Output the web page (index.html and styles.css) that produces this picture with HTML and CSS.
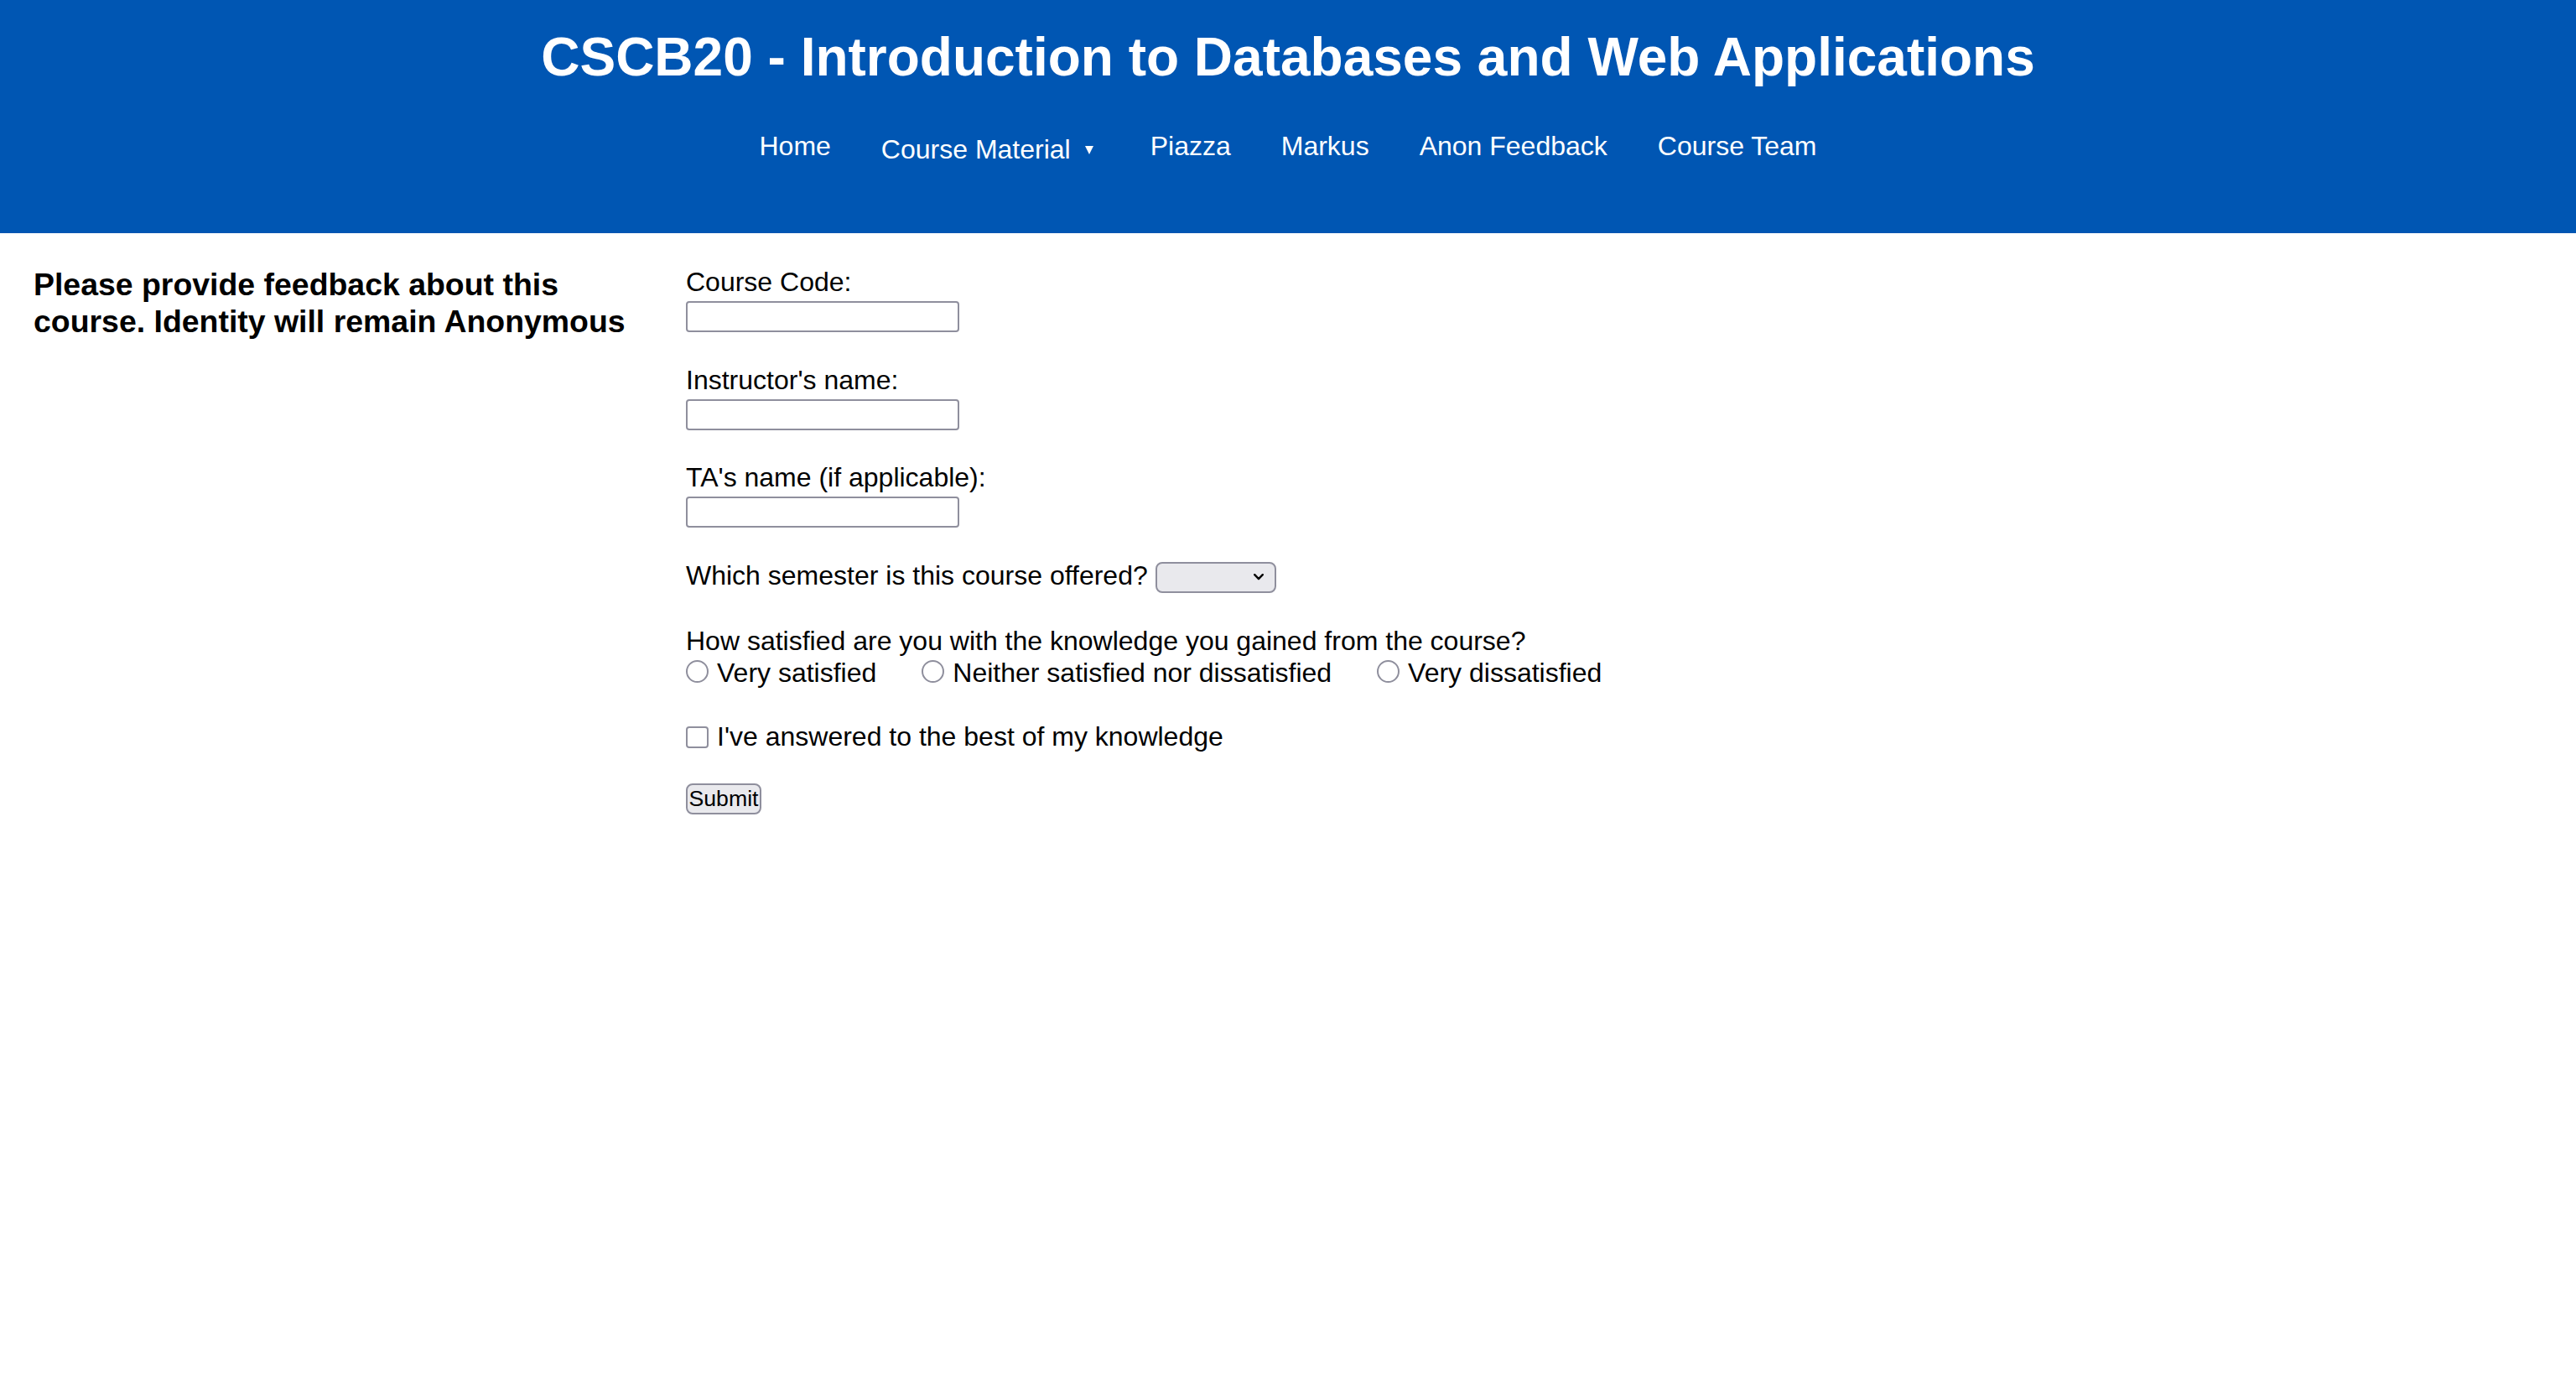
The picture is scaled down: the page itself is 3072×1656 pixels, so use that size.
FILE: index.html
```html
<!DOCTYPE html>
<html lang="en">
<head>
<meta charset="utf-8">
<title>CSCB20 - Anon Feedback</title>
<link rel="stylesheet" href="styles.css">
</head>
<body>
<header class="site-header">
  <h1 class="site-title">CSCB20 - Introduction to Databases and Web Applications</h1>
  <nav class="site-nav">
    <a class="nav-link" href="#">Home</a>
    <div class="nav-dropdown">
      <span class="nav-link">Course Material</span>
      <span class="caret"></span>
    </div>
    <a class="nav-link" href="#">Piazza</a>
    <a class="nav-link" href="#">Markus</a>
    <a class="nav-link" href="#">Anon Feedback</a>
    <a class="nav-link" href="#">Course Team</a>
  </nav>
</header>
<main class="page">
  <aside class="intro">
    <h3 class="intro-title">Please provide feedback about this course. Identity will remain Anonymous</h3>
  </aside>
  <form class="feedback" action="#">
    <div class="field">
      <label class="field-label" for="code">Course Code:</label>
      <input class="text-input" id="code" type="text">
    </div>
    <div class="field">
      <label class="field-label" for="instructor">Instructor's name:</label>
      <input class="text-input" id="instructor" type="text">
    </div>
    <div class="field">
      <label class="field-label" for="ta">TA's name (if applicable):</label>
      <input class="text-input" id="ta" type="text">
    </div>
    <div class="field inline-field">
      <label class="inline-label" for="semester">Which semester is this course offered?</label>
      <span class="select-wrap">
        <select class="select" id="semester"><option></option></select>
        <svg class="chevron" width="12" height="8" viewBox="0 0 12 8"><path d="M1.2 1.2 L6 6.2 L10.8 1.2" fill="none" stroke="#000" stroke-width="2.4" stroke-linecap="round" stroke-linejoin="round"/></svg>
      </span>
    </div>
    <div class="field satisfaction">
      <p class="question">How satisfied are you with the knowledge you gained from the course?</p>
      <div class="options">
        <label class="option"><input class="radio" type="radio" name="sat">Very satisfied</label>
        <label class="option"><input class="radio" type="radio" name="sat">Neither satisfied nor dissatisfied</label>
        <label class="option"><input class="radio" type="radio" name="sat">Very dissatisfied</label>
      </div>
    </div>
    <div class="field">
      <label class="option"><input class="checkbox" type="checkbox">I've answered to the best of my knowledge</label>
    </div>
    <button class="submit" type="button">Submit</button>
  </form>
</main>
</body>
</html>
```
FILE: styles.css
```css
html, body {
  margin: 0;
  padding: 0;
  background: #ffffff;
}

body {
  font-family: "Liberation Sans", Arial, sans-serif;
  color: #000000;
}

.site-header {
  background: #0056b3;
  height: 278px;
  box-sizing: border-box;
  padding-top: 32px;
  color: #ffffff;
}

.site-title {
  margin: 0;
  font-size: 64px;
  font-weight: bold;
  text-align: center;
  line-height: 73.5px;
}

.site-nav {
  display: flex;
  justify-content: center;
  align-items: flex-start;
  gap: 60px;
  margin-top: 50px;
  font-size: 32px;
  line-height: 37px;
}

.nav-link {
  color: #ffffff;
  text-decoration: none;
}

.nav-dropdown {
  display: flex;
  align-items: flex-start;
  margin-top: 4px;
  padding-right: 8px;
}

.caret {
  width: 0;
  height: 0;
  margin-left: 17px;
  margin-top: 14px;
  border-left: 5px solid transparent;
  border-right: 5px solid transparent;
  border-top: 10px solid #ffffff;
}

.page {
  display: grid;
  grid-template-columns: 818px 1fr;
}

.intro {
  padding: 39px 40px 0 40px;
}

.intro-title {
  margin: 0;
  font-size: 37.44px;
  line-height: 44px;
  font-weight: bold;
}

.feedback {
  padding-top: 40px;
  font-size: 32px;
  line-height: 36px;
}

.field {
  margin-bottom: 38.5px;
}

.field-label {
  display: block;
}

.text-input {
  display: block;
  box-sizing: border-box;
  width: 326px;
  height: 37px;
  margin: 5px 0 0 0;
  padding: 0 4px;
  border: 2px solid #8f8f9d;
  border-radius: 4px;
  background: #ffffff;
  font-family: "Liberation Sans", Arial, sans-serif;
  font-size: 26.67px;
}

.inline-field {
  display: flex;
  align-items: flex-start;
  gap: 9px;
  margin-bottom: 40px;
}

.select-wrap {
  position: relative;
  display: block;
  width: 144px;
  height: 37px;
  margin-top: 1px;
}

.select {
  appearance: none;
  -webkit-appearance: none;
  box-sizing: border-box;
  width: 144px;
  height: 37px;
  margin: 0;
  border: 2px solid #8f8f9d;
  border-radius: 8px;
  background: #e9e9ed;
  font-family: "Liberation Sans", Arial, sans-serif;
  font-size: 26.67px;
}

.chevron {
  position: absolute;
  left: 117px;
  top: 15px;
  pointer-events: none;
}

.satisfaction {
  margin-bottom: 40px;
}

.question {
  margin: 0;
}

.options {
  display: flex;
  gap: 54px;
  margin-top: 2px;
}

.option {
  display: flex;
  align-items: center;
}

.radio {
  appearance: none;
  -webkit-appearance: none;
  box-sizing: border-box;
  width: 27px;
  height: 27px;
  margin: 0 10px 0 0;
  border: 2px solid #8f8f9d;
  border-radius: 50%;
  background: #ffffff;
  position: relative;
  top: -1px;
}

.checkbox {
  appearance: none;
  -webkit-appearance: none;
  box-sizing: border-box;
  width: 27px;
  height: 26px;
  margin: 0 10px 0 0;
  border: 2px solid #8f8f9d;
  border-radius: 4px;
  background: #ffffff;
  position: relative;
  top: 1px;
}

.submit {
  display: block;
  box-sizing: border-box;
  width: 90px;
  height: 37px;
  margin-top: 16px;
  padding: 0;
  border: 2px solid #8f8f9d;
  border-radius: 8px;
  background: #e9e9ed;
  color: #000000;
  font-family: "Liberation Sans", Arial, sans-serif;
  font-size: 26.67px;
  line-height: 33px;
}
```
